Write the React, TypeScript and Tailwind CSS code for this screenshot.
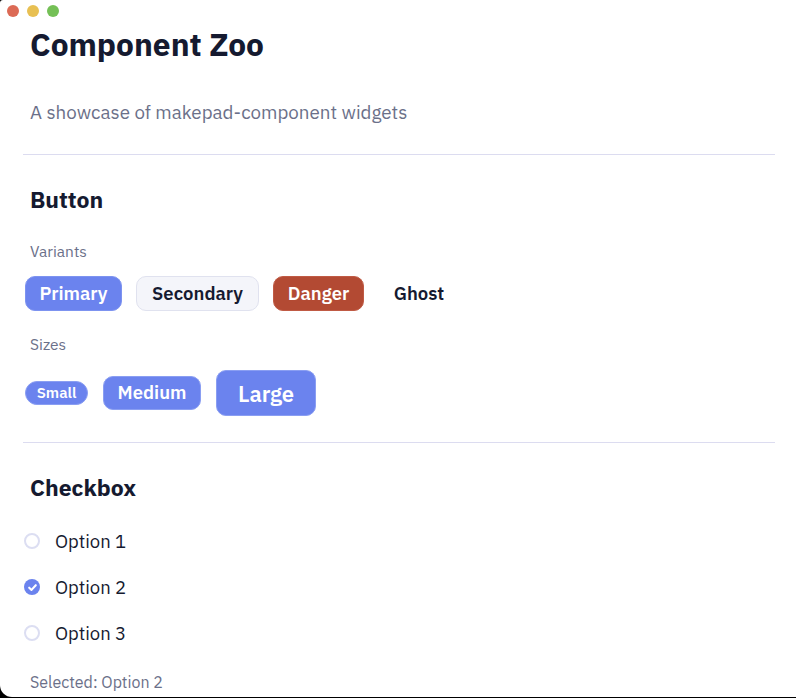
import React, { useState } from 'react';

const font = { fontFamily: '"IBM Plex Sans", Inter, "Noto Sans", sans-serif' };

const Divider: React.FC = () => <div className="ml-[23px] mr-[21px] h-px bg-[#dcdcf0]" />;

const CheckRow: React.FC<{ label: string; checked: boolean; onClick: () => void }> = ({ label, checked, onClick }) => (
  <button onClick={onClick} className="flex items-center gap-[15px] h-[46px] text-left">
    {checked ? (
      <span className="w-4 h-4 rounded-full bg-[#6b83ee] flex items-center justify-center">
        <svg width="11" height="11" viewBox="0 0 10 10" fill="none">
          <path d="M2 5.2 L4.1 7.2 L8 2.9" stroke="white" strokeWidth="1.9" strokeLinecap="round" strokeLinejoin="round" />
        </svg>
      </span>
    ) : (
      <span className="w-4 h-4 rounded-full border-2 border-[#dcdef2] bg-white" />
    )}
    <span className="text-[18.5px] leading-6 text-[#151a30]">{label}</span>
  </button>
);

const App: React.FC = () => {
  const [selected, setSelected] = useState('Option 2');
  const options = ['Option 1', 'Option 2', 'Option 3'];

  return (
    <div className="w-[796px] h-[698px] bg-black overflow-hidden" style={font}>
      <div className="h-[697px] bg-white rounded-bl-[12px] rounded-tl-[3px] overflow-hidden">
        <div className="flex gap-2 pl-[7px] pt-[5px]">
          <span className="w-3 h-3 rounded-full bg-[#dc6a55]" />
          <span className="w-3 h-3 rounded-full bg-[#e8c052]" />
          <span className="w-3 h-3 rounded-full bg-[#74c056]" />
        </div>

        <div className="px-[30px] pt-[10px]">
          <h1 className="text-[31.7px] font-bold leading-[36px] text-[#151a30]">Component Zoo</h1>
          <p className="mt-[37px] text-[18.8px] leading-6 text-[#6b7089]">A showcase of makepad-component widgets</p>
        </div>

        <div className="mt-[30px]">
          <Divider />
        </div>

        <section className="pt-[29px]">
          <h2 className="px-[30px] text-[23px] font-bold leading-[30px] text-[#151a30]">Button</h2>
          <div className="px-[30px] mt-[27px] text-[15.5px] leading-5 text-[#6b7089]">Variants</div>
          <div className="flex items-center gap-[14px] px-[25px] mt-[15px]">
            <button className="h-[35px] w-[97px] rounded-[10px] bg-[#6b83ee] border border-[#7d93f0] text-white text-[18.5px] font-semibold">Primary</button>
            <button className="h-[35px] w-[123px] rounded-[10px] bg-[#f4f5fa] border border-[#e0e2ef] text-[#151a30] text-[18.5px] font-semibold">Secondary</button>
            <button className="h-[35px] w-[91px] rounded-[10px] bg-[#b34a33] border border-[#c05a44] text-white text-[18.5px] font-semibold">Danger</button>
            <button className="h-[35px] w-[82px] rounded-[10px] text-[#151a30] text-[18.5px] font-semibold">Ghost</button>
          </div>

          <div className="px-[30px] mt-[23px] text-[15.5px] leading-5 text-[#6b7089]">Sizes</div>
          <div className="flex items-center gap-[15px] px-[25px] mt-[16px]">
            <button className="h-6 w-[63px] rounded-full bg-[#6b83ee] border border-[#8a9ef2] text-white text-[15px] font-semibold">Small</button>
            <button className="h-[34px] w-[98px] rounded-[10px] bg-[#6b83ee] border border-[#8a9ef2] text-white text-[18.5px] font-semibold">Medium</button>
            <button className="h-[46px] w-[100px] rounded-[10px] bg-[#6b83ee] border border-[#8a9ef2] text-white text-[22px] font-semibold">Large</button>
          </div>
        </section>

        <div className="mt-[26px]">
          <Divider />
        </div>

        <section className="pt-[29px]">
          <h2 className="px-[30px] text-[23px] font-bold leading-[30px] text-[#151a30]">Checkbox</h2>
          <div className="flex flex-col px-6 mt-[16px]">
            {options.map(o => (
              <CheckRow key={o} label={o} checked={selected === o} onClick={() => setSelected(o)} />
            ))}
          </div>
          <div className="px-[30px] mt-[16px] text-[16px] leading-5 text-[#6b7089]">Selected: {selected}</div>
        </section>
      </div>
    </div>
  );
};

export default App;
